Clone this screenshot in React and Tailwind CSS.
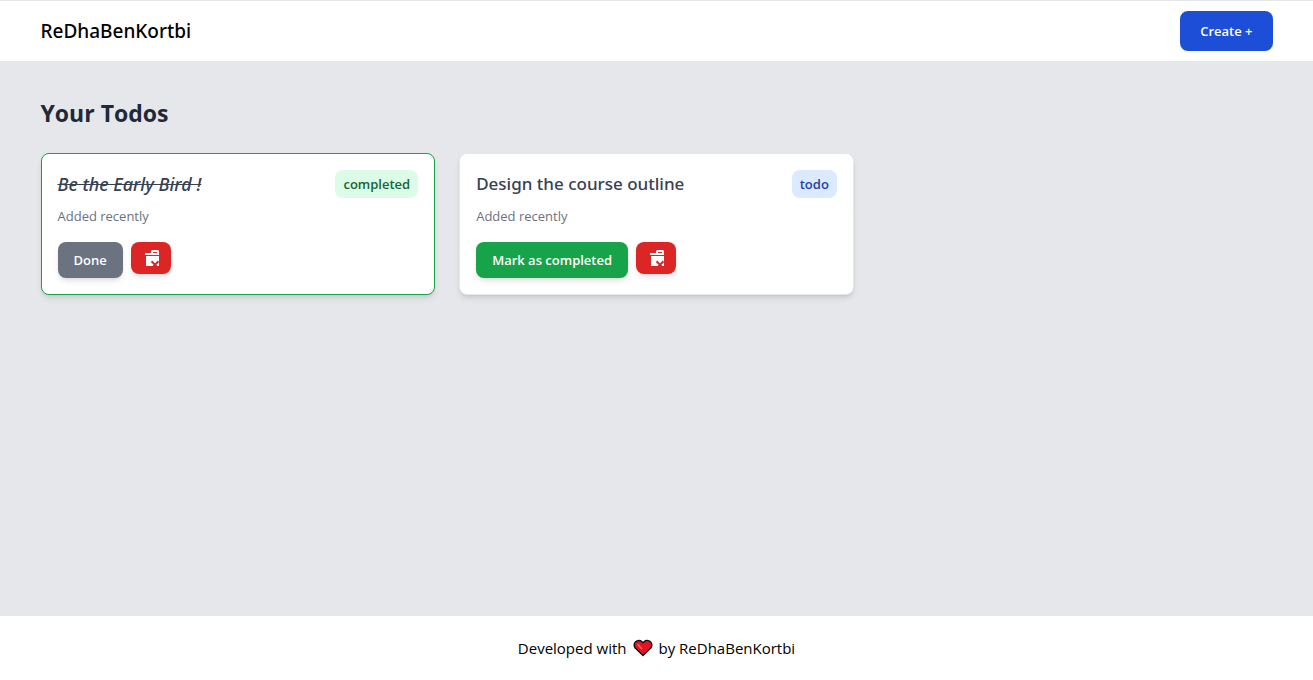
const todos = [
  { id: 1, title: "Be the Early Bird !", status: "completed", done: true },
  { id: 2, title: "Design the course outline", status: "todo", done: false },
];

function TrashIcon() {
  return (
    <svg className="size-4" viewBox="0 0 16 16" fill="currentColor" aria-hidden="true">
      <path
        fillRule="evenodd"
        d="M3 6v18h18V6H3zM22 3v2H2V3h6V1.500C8 .673 8.673 0 9.500 0h5c.825 0 1.500.671 1.500 1.500V3h6zM10 3h4V2h-4v1z"
      />
      <path d="M8.500 11.300l7 7M15.500 11.300l-7 7" className="stroke-[#dc2626]" strokeWidth="2" />
    </svg>
  );
}

function Heart() {
  return (
    <svg className="h-[18px] w-5" viewBox="0 0 20 18" role="img" aria-label="love">
      <path
        d="M10 16.500L2.200 9C.9 7 1 4.400 2.600 2.800 4.400 1 7.200 1 8.900 2.700L10 3.800l1.100-1.100c1.700-1.700 4.500-1.700 6.300.1C19 4.400 19.100 7 17.800 9z"
        fill="#e81224"
        stroke="#111111"
        strokeWidth="1.400"
        strokeLinejoin="round"
      />
      <path d="M5 5.500l3.500 4" stroke="#f4664f" strokeWidth="1.600" strokeLinecap="round" />
    </svg>
  );
}

function TodoCard({ todo }) {
  return (
    <li
      className={`rounded-lg border bg-white p-4 shadow-md ${
        todo.done ? "border-[#16a34a]" : "border-[#e5e7eb]"
      }`}
    >
      <div className="flex items-center justify-between gap-2">
        <h3
          className={`font-['Noto_Sans','Open_Sans',sans-serif] leading-7 font-medium text-[#374151] ${
            todo.done ? "text-[18px] italic line-through" : "text-[17px]"
          }`}
        >
          {todo.title}
        </h3>
        <span
          className={`rounded-lg px-2 py-1 text-[13px] leading-5 font-semibold ${
            todo.done ? "bg-[#dcfce7] text-[#166534]" : "bg-[#dbeafe] text-[#1e40af]"
          }`}
        >
          {todo.status}
        </span>
      </div>
      <p className="mt-2 text-[13px] leading-5 text-[#6b7280]">Added recently</p>
      <div className="mt-4 flex items-start gap-2">
        <button
          type="button"
          className={`rounded-lg px-4 py-2 text-[13px] leading-5 font-semibold text-white shadow-md ${
            todo.done ? "bg-[#6b7280]" : "bg-[#16a34a]"
          }`}
        >
          {todo.done ? "Done" : "Mark as completed"}
        </button>
        <button type="button" aria-label="Delete" className="rounded-lg bg-[#dc2626] px-3 py-2 text-white shadow-md">
          <TrashIcon />
        </button>
      </div>
    </li>
  );
}

export default function App() {
  return (
    <div className="flex min-h-screen flex-col bg-[#e5e7eb] font-['Open_Sans','Noto_Sans',sans-serif]">
      <header className="border-t border-[#e5e7eb] bg-white">
        <div className="mx-auto flex max-w-7xl items-center justify-between px-6 py-[10px]">
          <a href="#" className="font-['Noto_Sans','Open_Sans',sans-serif] text-[19px] leading-7 font-medium text-black">
            ReDhaBenKortbi
          </a>
          <button
            type="button"
            className="rounded-lg bg-[#1d4ed8] px-5 py-[10px] text-[13px] leading-5 font-semibold text-white"
          >
            Create +
          </button>
        </div>
      </header>
      <main className="mx-auto w-full max-w-7xl grow px-6 py-9">
        <h1 className="mb-6 text-[23px] leading-8 font-bold text-[#1f2937]">Your Todos</h1>
        <ul className="grid grid-cols-1 gap-6 md:grid-cols-2 lg:grid-cols-3">
          {todos.map((todo) => (
            <TodoCard key={todo.id} todo={todo} />
          ))}
        </ul>
      </main>
      <footer className="flex items-center justify-center gap-1.5 bg-white py-5 text-[15px] leading-6 text-black">
        <span>Developed with</span>
        <Heart />
        <span>by ReDhaBenKortbi</span>
      </footer>
    </div>
  );
}
